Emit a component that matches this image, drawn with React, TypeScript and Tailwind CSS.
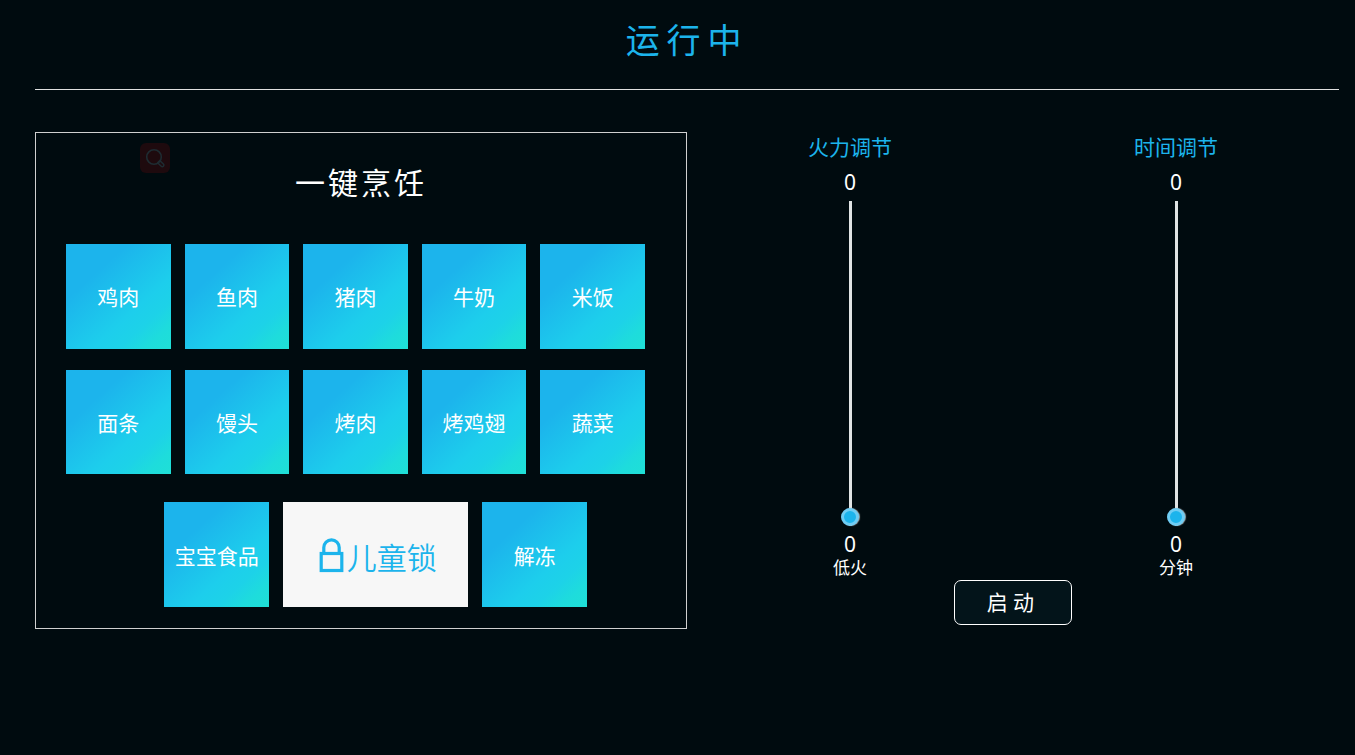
import { useState } from 'react';

const FOODS = ['鸡肉', '鱼肉', '猪肉', '牛奶', '米饭', '面条', '馒头', '烤肉', '烤鸡翅', '蔬菜'];

function FoodButton({ label }: { label: string }) {
  return (
    <button
      type="button"
      className="aspect-square w-full whitespace-nowrap bg-[linear-gradient(138deg,#1cb4ec_28%,#1dceec_64%,#1dd2e8_76%,#1edcdc_88%,#1fe0d6_100%)] pt-0.5 text-center text-[21px] leading-[24px] text-white"
    >
      {label}
    </button>
  );
}

function LockIcon() {
  return (
    <svg width="25" height="35" viewBox="0 0 25 35" fill="none" stroke="#1cb4ec" aria-hidden="true">
      <path d="M4.8 14.5V9.5a7.7 7.7 0 0 1 15.4 0v5" strokeWidth="3.2" />
      <rect x="2.2" y="15.5" width="20.6" height="17" strokeWidth="3.2" />
    </svg>
  );
}

interface SliderProps {
  id: string;
  title: string;
  unit: string;
  max: number;
}

function VerticalSlider({ id, title, unit, max }: SliderProps) {
  const [value, setValue] = useState(0);

  return (
    <div className="flex flex-col items-center text-[21px] leading-[24px] text-white">
      <label htmlFor={id} className="mt-[3px] text-[#1cb4ec]">
        {title}
      </label>
      <span className="mt-[11px]">{value}</span>
      <input
        id={id}
        type="range"
        min={0}
        max={max}
        value={value}
        onChange={(e) => setValue(Number(e.target.value))}
        className="mt-[7px] h-[325px] w-[18px] cursor-pointer appearance-none bg-[linear-gradient(#e0e4e4,#e0e4e4)] bg-[length:3px_100%] bg-center bg-no-repeat [direction:rtl] [writing-mode:vertical-lr] [&::-webkit-slider-thumb]:size-[18px] [&::-webkit-slider-thumb]:appearance-none [&::-webkit-slider-thumb]:rounded-full [&::-webkit-slider-thumb]:border-[3px] [&::-webkit-slider-thumb]:border-[#6fcdf4] [&::-webkit-slider-thumb]:bg-[#1cb4ec] [&::-webkit-slider-thumb]:shadow-[1px_0_1px_#9aa5a8]"
      />
      <span className="mt-[6px]">{value}</span>
      <span className="text-[17px]">{unit}</span>
    </div>
  );
}

export default function App() {
  return (
    <div className="min-h-screen bg-[#000b0f] pl-[35px] pr-4 font-['Noto_Sans','Noto_Sans_CJK_SC',sans-serif]">
      {/* Status */}
      <header className="border-b border-[#e0e0e0] pb-[25px] pt-4 text-center">
        <h1 className="text-[34px] leading-[48px] tracking-[0.2em] text-[#1cb4ec]">运行中</h1>
      </header>

      <main className="mt-[42px] grid grid-cols-2">
        {/* One-touch cooking */}
        <section className="relative border border-[#d0d0d0] pb-[21px] pl-[30px] pr-[41px]">
          <button
            type="button"
            aria-label="搜索"
            className="absolute left-[104px] top-[10px] flex size-[30px] items-center justify-center rounded-md bg-[#1e0a0e]"
          >
            <svg width="20" height="20" viewBox="0 0 20 20" fill="none" stroke="#1e2c32" aria-hidden="true">
              <circle cx="9" cy="9" r="7.3" strokeWidth="1.6" />
              <path d="M12.6 14.8l2.2-2.2 3.6 3.4a1.5 1.5 0 0 1-2.2 2.2z" strokeWidth="1.5" strokeLinejoin="round" />
            </svg>
          </button>

          <h2 className="-mr-[11px] pt-[26px] text-center text-[30px] leading-[48px] tracking-widest text-white">
            一键烹饪
          </h2>

          <div className="mt-[37px] grid grid-cols-5 gap-x-[14px] gap-y-[21px]">
            {FOODS.map((food) => (
              <FoodButton key={food} label={food} />
            ))}
          </div>

          <div className="ml-[17%] mr-[10%] mt-[28px] grid grid-cols-[105fr_186fr_105fr] gap-x-[14px]">
            <FoodButton label="宝宝食品" />
            <button
              type="button"
              className="flex items-center justify-center gap-[3px] bg-[#f7f7f7] pl-1 pt-0.5 font-['Noto_Sans_CJK_SC',sans-serif] text-[30px] font-[350] leading-[36px] text-[#1cb4ec]"
            >
              <LockIcon />
              儿童锁
            </button>
            <FoodButton label="解冻" />
          </div>
        </section>

        {/* Power and time */}
        <section>
          <div className="grid grid-cols-2">
            <VerticalSlider id="power" title="火力调节" unit="低火" max={5} />
            <VerticalSlider id="time" title="时间调节" unit="分钟" max={60} />
          </div>
          <div className="flex justify-center">
            <button
              type="button"
              className="h-[45px] w-[118px] rounded-[7px] border border-white bg-[#03141a] pb-0.5 text-[21px] leading-[24px] tracking-[0.25em] text-white"
            >
              启动
            </button>
          </div>
        </section>
      </main>
    </div>
  );
}
